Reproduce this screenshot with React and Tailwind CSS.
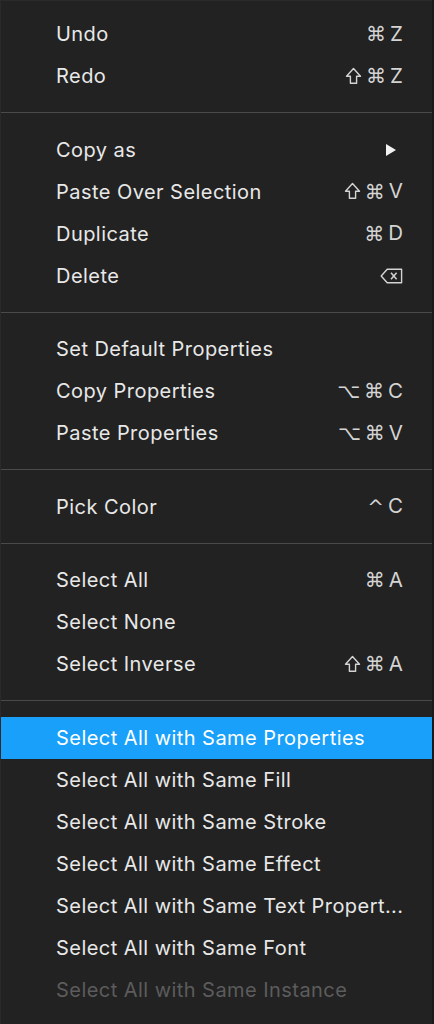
import React from "react";

const groups = [
  [
    { label: "Undo", keys: ["⌘", "Z"] },
    { label: "Redo", keys: ["⇧", "⌘", "Z"] },
  ],
  [
    { label: "Copy as", submenu: true },
    { label: "Paste Over Selection", keys: ["⇧", "⌘", "V"] },
    { label: "Duplicate", keys: ["⌘", "D"] },
    { label: "Delete", keys: ["⌫"] },
  ],
  [
    { label: "Set Default Properties" },
    { label: "Copy Properties", keys: ["⌥", "⌘", "C"] },
    { label: "Paste Properties", keys: ["⌥", "⌘", "V"] },
  ],
  [{ label: "Pick Color", keys: ["^", "C"] }],
  [
    { label: "Select All", keys: ["⌘", "A"] },
    { label: "Select None" },
    { label: "Select Inverse", keys: ["⇧", "⌘", "A"] },
  ],
  [
    { label: "Select All with Same Properties", active: true },
    { label: "Select All with Same Fill" },
    { label: "Select All with Same Stroke" },
    { label: "Select All with Same Effect" },
    { label: "Select All with Same Text Propert..." },
    { label: "Select All with Same Font" },
    { label: "Select All with Same Instance", disabled: true },
  ],
];

const Key = ({ k }) => {
  if (k === "⇧")
    return (
      <svg width="17" height="18" viewBox="0 0 17 18" className="mt-[-1px]">
        <path
          d="M8.5 1.5 L15.5 9.2 H11.6 V16.2 H5.4 V9.2 H1.5 Z"
          fill="none"
          stroke="#d4d4d4"
          strokeWidth="1.4"
          strokeLinejoin="round"
        />
      </svg>
    );
  if (k === "⌫")
    return (
      <svg width="23" height="16" viewBox="0 0 23 16">
        <path
          d="M7.2 1.2 H21.6 V14.8 H7.2 L1.2 8 Z"
          fill="none"
          stroke="#d4d4d4"
          strokeWidth="1.4"
          strokeLinejoin="round"
        />
        <path d="M11 4.8 L16.6 11.2 M16.6 4.8 L11 11.2" stroke="#d4d4d4" strokeWidth="1.5" />
      </svg>
    );
  if (/[A-Z]/.test(k))
    return <span className="font-['Inter',sans-serif] text-[20.5px] leading-none">{k}</span>;
  return <span className="text-[20px] leading-none">{k}</span>;
};

const MenuRow = ({ item }) => {
  const text = item.disabled
    ? "text-[#5c5c5c]"
    : item.active
    ? "text-white"
    : "text-[#e8e8e8]";
  return (
    <div
      className={`flex items-center justify-between h-[42px] pl-[55px] pr-[29px] ${
        item.active ? "bg-[#18a0fb]" : ""
      }`}
    >
      <span className={`whitespace-nowrap text-[20px] tracking-[0.45px] ${text}`}>{item.label}</span>
      {item.keys && (
        <span className="flex items-center gap-[4px] text-[#d4d4d4] font-['DejaVu_Sans',sans-serif]">
          {item.keys.map((k, i) => (
            <Key key={i} k={k} />
          ))}
        </span>
      )}
      {item.submenu && (
        <svg width="12" height="14" viewBox="0 0 12 14" className="mr-[6px]">
          <path d="M1 1 L11 7 L1 13 Z" fill="#f2f2f2" />
        </svg>
      )}
    </div>
  );
};

export default function App() {
  return (
    <div className="w-[434px] h-[1024px] bg-[#1a1a1a] font-['Inter',sans-serif]">
      <div className="w-[432px] h-[1024px] bg-[#222222] border-t border-l border-[#2a2a2a] pt-[12px]">
        {groups.map((g, gi) => (
          <div key={gi}>
            {gi > 0 && (
              <div className="pt-[15px] pb-[15.5px]">
                <div className="h-px bg-[#4a4a4a]" />
              </div>
            )}
            {g.map((item) => (
              <MenuRow key={item.label} item={item} />
            ))}
          </div>
        ))}
      </div>
    </div>
  );
}
